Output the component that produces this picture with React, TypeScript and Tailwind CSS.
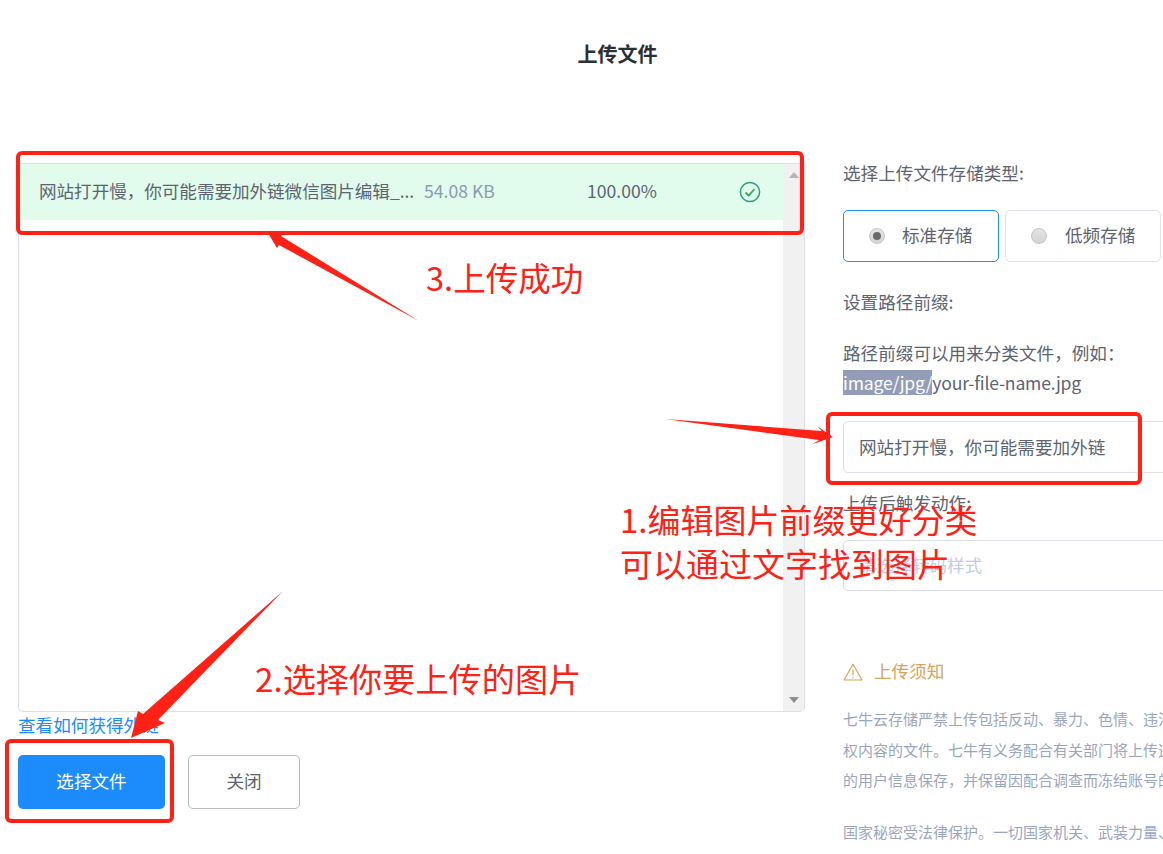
import React from "react";

const font = { fontFamily: '"Noto Sans CJK SC", "Noto Sans", sans-serif' };

function Radio({ on }: { on?: boolean }) {
  return (
    <span className="flex h-4 w-4 items-center justify-center rounded-full border border-[#c4c4c4] bg-gradient-to-b from-[#e4e4e4] to-[#d4d4d4]">
      {on ? <span className="h-2 w-2 rounded-full bg-[#6a6a6a]" /> : null}
    </span>
  );
}

function Option({ label, on }: { label: string; on?: boolean }) {
  return (
    <div className={`flex h-[52px] w-[156px] items-center gap-[17px] rounded-[5px] border pl-[25px] ${on ? "border-[#1c8cfc]" : "border-[#e0e3ec]"}`}>
      <Radio on={on} />
      <span className={`pb-[2px] ${on ? "" : "ml-[1px]"}`}>{label}</span>
    </div>
  );
}

export default function App() {
  return (
    <div style={font} className="relative h-[854px] w-[1163px] overflow-hidden bg-white text-[17.6px] leading-[26px] text-[#5d6470]">
      <header className="h-[108px] pl-[72px] pt-[41px] text-center text-[20px] font-bold leading-[26px] text-[#2b2f36]">上传文件</header>

      <main className="mt-[55px] flex pl-[18px]">
        <section className="w-[787px] shrink-0">
          <div className="flex h-[549px] rounded-b-[5px] border border-[#dcdfe8]">
            <div className="min-w-0 flex-1">
              <div className="flex h-[56px] items-center bg-[#e1fcec] pl-5">
                <span className="w-[385px] shrink-0 whitespace-nowrap pb-[3px] tracking-[-0.05px]">网站打开慢，你可能需要加外链微信图片编辑_...</span>
                <span className="w-[163px] shrink-0 pb-[3px] text-[#8d9ab0]">54.08 KB</span>
                <span className="w-[152px] shrink-0 pb-[3px]">100.00%</span>
                <svg viewBox="0 0 22 22" className="h-[22px] w-[22px]" fill="none">
                  <circle cx="11" cy="11" r="9.6" stroke="#2f9e7f" strokeWidth="1.5" />
                  <path d="M6.5 11.5 L9.7 14.6 L15.5 8" stroke="#38a85a" strokeWidth="1.8" />
                </svg>
              </div>
            </div>
            <div className="flex w-[21px] flex-col justify-between bg-[#f1f1f1] pb-[8px] pt-[8px]">
              <svg viewBox="0 0 10 6" className="mx-auto h-[6px] w-[10px]"><polygon points="5,0 10,6 0,6" fill="#b5b5b5" /></svg>
              <svg viewBox="0 0 10 6" className="mx-auto h-[6px] w-[10px]"><polygon points="0,0 10,0 5,6" fill="#8f8f8f" /></svg>
            </div>
          </div>
          <a className="block text-[#1c8cfc]">查看如何获得外链</a>
          <div className="mt-[17px] flex gap-[23px]">
            <button className="h-[54px] w-[147px] rounded-[5px] bg-[#1c8cfc] pb-[3px] text-white">选择文件</button>
            <button className="h-[54px] w-[112px] rounded-[5px] border border-[#bcbcbc] pb-[2px] text-[#5d6470]">关闭</button>
          </div>
        </section>

        <aside className="ml-[38px] w-[420px] shrink-0 -mt-[3px]">
          <p>选择上传文件存储类型:</p>
          <div className="mt-[24px] flex gap-[6px]">
            <Option label="标准存储" on />
            <Option label="低频存储" />
          </div>
          <p className="mt-[27px]">设置路径前缀:</p>
          <p className="mt-[25px]">路径前缀可以用来分类文件，例如：</p>
          <p className="mt-[4px] tracking-[-0.2px]"><span className="bg-[#939db8] text-white">image/jpg/</span>your-file-name.jpg</p>
          <div className="mt-[25px] flex h-[52px] w-[400px] items-center rounded-[5px] border border-[#dcdfe8] pl-[15px]">网站打开慢，你可能需要加外链</div>
          <p className="mt-[17px]">上传后触发动作:</p>
          <div className="mt-[24px] flex h-[51px] w-[400px] items-center rounded-[5px] border border-[#dcdfe8] pb-[2px] pl-[15px] text-[#c0cde6]">请选择转码样式</div>
          <div className="mt-[67px] flex items-center gap-[11px] text-[#d5a35a]">
            <svg viewBox="0 0 20 18" className="h-[18px] w-[20px]" fill="none" stroke="#d5a35a" strokeWidth="1.2">
              <path d="M10 1.2 L19 17 H1 Z" strokeLinejoin="round" />
              <path d="M10 6.5 V12.5 M10 13.8 V15.2" />
            </svg>
            <span className="pb-[1px]">上传须知</span>
          </div>
          <div className="mt-[19px] whitespace-nowrap text-[15px] leading-[30.5px] text-[#9aa6c0]">
            <p>七牛云存储严禁上传包括反动、暴力、色情、违法及侵</p>
            <p>权内容的文件。七牛有义务配合有关部门将上传违规文件</p>
            <p>的用户信息保存，并保留因配合调查而冻结账号的权利。</p>
            <p className="mt-[21px]">国家秘密受法律保护。一切国家机关、武装力量、政党</p>
          </div>
        </aside>
      </main>

      <div className="pointer-events-none absolute left-[16px] top-[151px] h-[84px] w-[788px] rounded-[6px] border-[4px] border-[#fd2116]" />
      <div className="pointer-events-none absolute left-[826px] top-[412px] h-[73px] w-[316px] rounded-[6px] border-[4px] border-[#fd2116]" />
      <div className="pointer-events-none absolute left-[5px] top-[739px] h-[84px] w-[169px] rounded-[6px] border-[4px] border-[#fd2116]" />

      <svg className="pointer-events-none absolute left-0 top-0 h-[854px] w-[1163px]" viewBox="0 0 1163 854">
        <polygon points="268,233 283,234 281,236 419,321 279,245 277,248" fill="#fd2116" />
        <polygon points="665,419 822,431 817,426 833,437 813,444 819,440" fill="#fd2116" />
        <polygon points="283,591 158,720 165,723 131,738 138,711 143,714" fill="#fd2116" />
      </svg>

      <div className="absolute left-[426px] top-[255px] whitespace-nowrap text-[32.6px] leading-[44px] text-[#fd2116]">3.上传成功</div>
      <div className="absolute left-[620px] top-[497px] whitespace-nowrap text-[33px] leading-[44px] text-[#fd2116]">1.编辑图片前缀更好分类<br />可以通过文字找到图片</div>
      <div className="absolute left-[255px] top-[656px] whitespace-nowrap text-[33.2px] leading-[44px] text-[#fd2116]">2.选择你要上传的图片</div>
    </div>
  );
}
